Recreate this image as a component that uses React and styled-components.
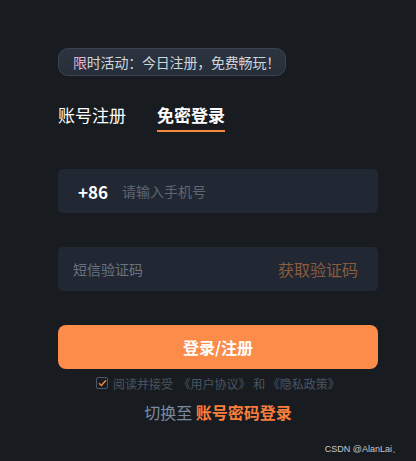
import React from "react";
import styled, { createGlobalStyle } from "styled-components";

const Global = createGlobalStyle`
  html, body { margin: 0; padding: 0; background: #181c20; }
  body { font-family: "Noto Sans CJK SC", "Noto Sans", sans-serif; }
  * { box-sizing: border-box; }
`;

const Page = styled.div`
  position: relative;
  width: 416px;
  height: 461px;
  background: #181c20;
  padding: 48px 0 0 58px;
  overflow: hidden;
`;

const Panel = styled.div`
  width: 320px;
  display: flex;
  flex-direction: column;
  align-items: flex-start;
`;

const Badge = styled.div`
  display: inline-flex;
  align-items: center;
  height: 28px;
  padding: 0 5px 0 14px;
  border: 1px solid #3a4351;
  border-radius: 10px;
  background: linear-gradient(180deg, #2c3441 0%, #262e39 100%);
  font-size: 14px;
  letter-spacing: -0.2px;
  color: #cfd5dd;
  white-space: nowrap;
`;

const Pink = styled.span`
  color: #e6b0d6;
`;

const Tabs = styled.div`
  display: flex;
  gap: 31px;
  margin-top: 27px;
`;

const Tab = styled.div`
  font-size: 17px;
  line-height: 24px;
  font-weight: ${(p) => (p.$active ? 700 : 400)};
  color: #ffffff;
  padding-bottom: 3px;
  border-bottom: 2px solid ${(p) => (p.$active ? "#f5873f" : "transparent")};
`;

const Field = styled.div`
  width: 320px;
  height: 44px;
  margin-top: ${(p) => p.$mt}px;
  background: #212833;
  border-radius: 5px;
  display: flex;
  align-items: center;
  padding: 0 20px 0 ${(p) => p.$pl}px;
`;

const Prefix = styled.span`
  font-size: 17px;
  font-weight: 700;
  color: #ffffff;
  margin-right: 14px;
`;

const Placeholder = styled.span`
  font-size: 14px;
  color: ${(p) => p.$c};
  flex: 1;
`;

const CodeLink = styled.span`
  font-size: 16px;
  color: #8c5a3c;
`;

const Submit = styled.button`
  width: 320px;
  height: 44px;
  margin-top: 34px;
  border: none;
  border-radius: 8px;
  background: #fb8c4a;
  color: #ffffff;
  font-family: inherit;
  font-size: 16px;
  font-weight: 700;
  display: flex;
  align-items: center;
  justify-content: center;
  padding: 0;
`;

const Agree = styled.div`
  width: 320px;
  height: 16px;
  margin-top: 6px;
  display: flex;
  align-items: center;
  justify-content: center;
  gap: 5px;
  font-size: 12px;
  color: #4a5563;
  white-space: pre;
`;

const Check = styled.span`
  width: 12px;
  height: 12px;
  border: 1px solid #4f5866;
  border-radius: 2px;
  display: flex;
  align-items: center;
  justify-content: center;
`;

const Switch = styled.div`
  width: 320px;
  margin-top: 10px;
  line-height: 22px;
  font-size: 16px;
  text-align: center;
  color: #7a8ba0;
  white-space: pre;
`;

const Strong = styled.span`
  color: #fa7d3c;
  font-weight: 700;
`;

const Mark = styled.div`
  position: absolute;
  right: 15px;
  bottom: 5px;
  font-family: "Liberation Sans", Arial, sans-serif;
  font-size: 9px;
  color: #c8c8c8;
`;

export default function App() {
  return (
    <>
      <Global />
      <Page>
        <Panel>
          <Badge>
            <Pink>限</Pink>时活动：今日注册，免费畅玩！
          </Badge>
          <Tabs>
            <Tab>账号注册</Tab>
            <Tab $active>免密登录</Tab>
          </Tabs>
          <Field $mt={37} $pl={20}>
            <Prefix>+86</Prefix>
            <Placeholder $c="#5f6671">请输入手机号</Placeholder>
          </Field>
          <Field $mt={34} $pl={15}>
            <Placeholder $c="#6a7380">短信验证码</Placeholder>
            <CodeLink>获取验证码</CodeLink>
          </Field>
          <Submit>登录/注册</Submit>
          <Agree>
            <Check>
              <svg width="9" height="8" viewBox="0 0 9 8">
                <path d="M1 4.2 L3.4 6.5 L8 1.2" fill="none" stroke="#f5873f" strokeWidth="1.4" />
              </svg>
            </Check>
            <span>阅读并接受  《用户协议》 和 《隐私政策》</span>
          </Agree>
          <Switch>
            切换至 <Strong>账号密码登录</Strong>
          </Switch>
        </Panel>
        <Mark>CSDN @AlanLai、</Mark>
      </Page>
    </>
  );
}
